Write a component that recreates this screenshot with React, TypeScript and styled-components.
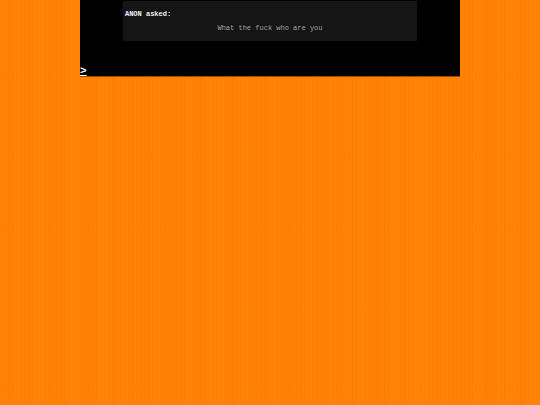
import styled, { createGlobalStyle } from "styled-components";

const GlobalStyle = createGlobalStyle`
  body {
    margin: 0;
    background-color: #ff8205;
    background-image:
      repeating-linear-gradient(
        90deg,
        rgba(225, 95, 0, 0.07) 0px,
        rgba(225, 95, 0, 0.07) 1px,
        transparent 1px,
        transparent 4px
      ),
      repeating-linear-gradient(
        90deg,
        transparent 0px,
        transparent 9px,
        rgba(225, 95, 0, 0.06) 11px,
        transparent 17px
      ),
      repeating-linear-gradient(
        90deg,
        transparent 0px,
        rgba(255, 140, 12, 0.2) 13px,
        transparent 29px
      );
    font-family: "Liberation Mono", "Courier New", monospace;
    font-size: 7px;
    line-height: 8px;
  }
`;

const Column = styled.main`
  box-sizing: border-box;
  max-width: 380px;
  margin: 0 auto;
  padding-top: 1px;
  background-color: #000;
  border-bottom: 1px solid #a04a00;
`;

const Ask = styled.article`
  box-sizing: border-box;
  width: 77.4%;
  margin: 0 auto;
  padding: 9px 2px;
  background-color: #151515;
`;

const Asker = styled.h2`
  margin: 0;
  color: #f0f0f0;
  font-size: 7px;
  font-weight: bold;
`;

const Question = styled.p`
  margin: 6px 0 0;
  color: #a0a0a0;
  text-align: center;
`;

const Pager = styled.nav`
  padding-top: 25px;
  line-height: 10px;
`;

const NextLink = styled.a`
  display: block;
  width: fit-content;
  color: #fff;
  font-size: 11px;
  font-weight: bold;
  text-decoration: underline;
`;

export default function App() {
  return (
    <>
      <GlobalStyle />
      <Column>
        <Ask>
          <Asker>ANON asked:</Asker>
          <Question>What the fuck who are you</Question>
        </Ask>
        <Pager>
          <NextLink href="#">&gt;</NextLink>
        </Pager>
      </Column>
    </>
  );
}
